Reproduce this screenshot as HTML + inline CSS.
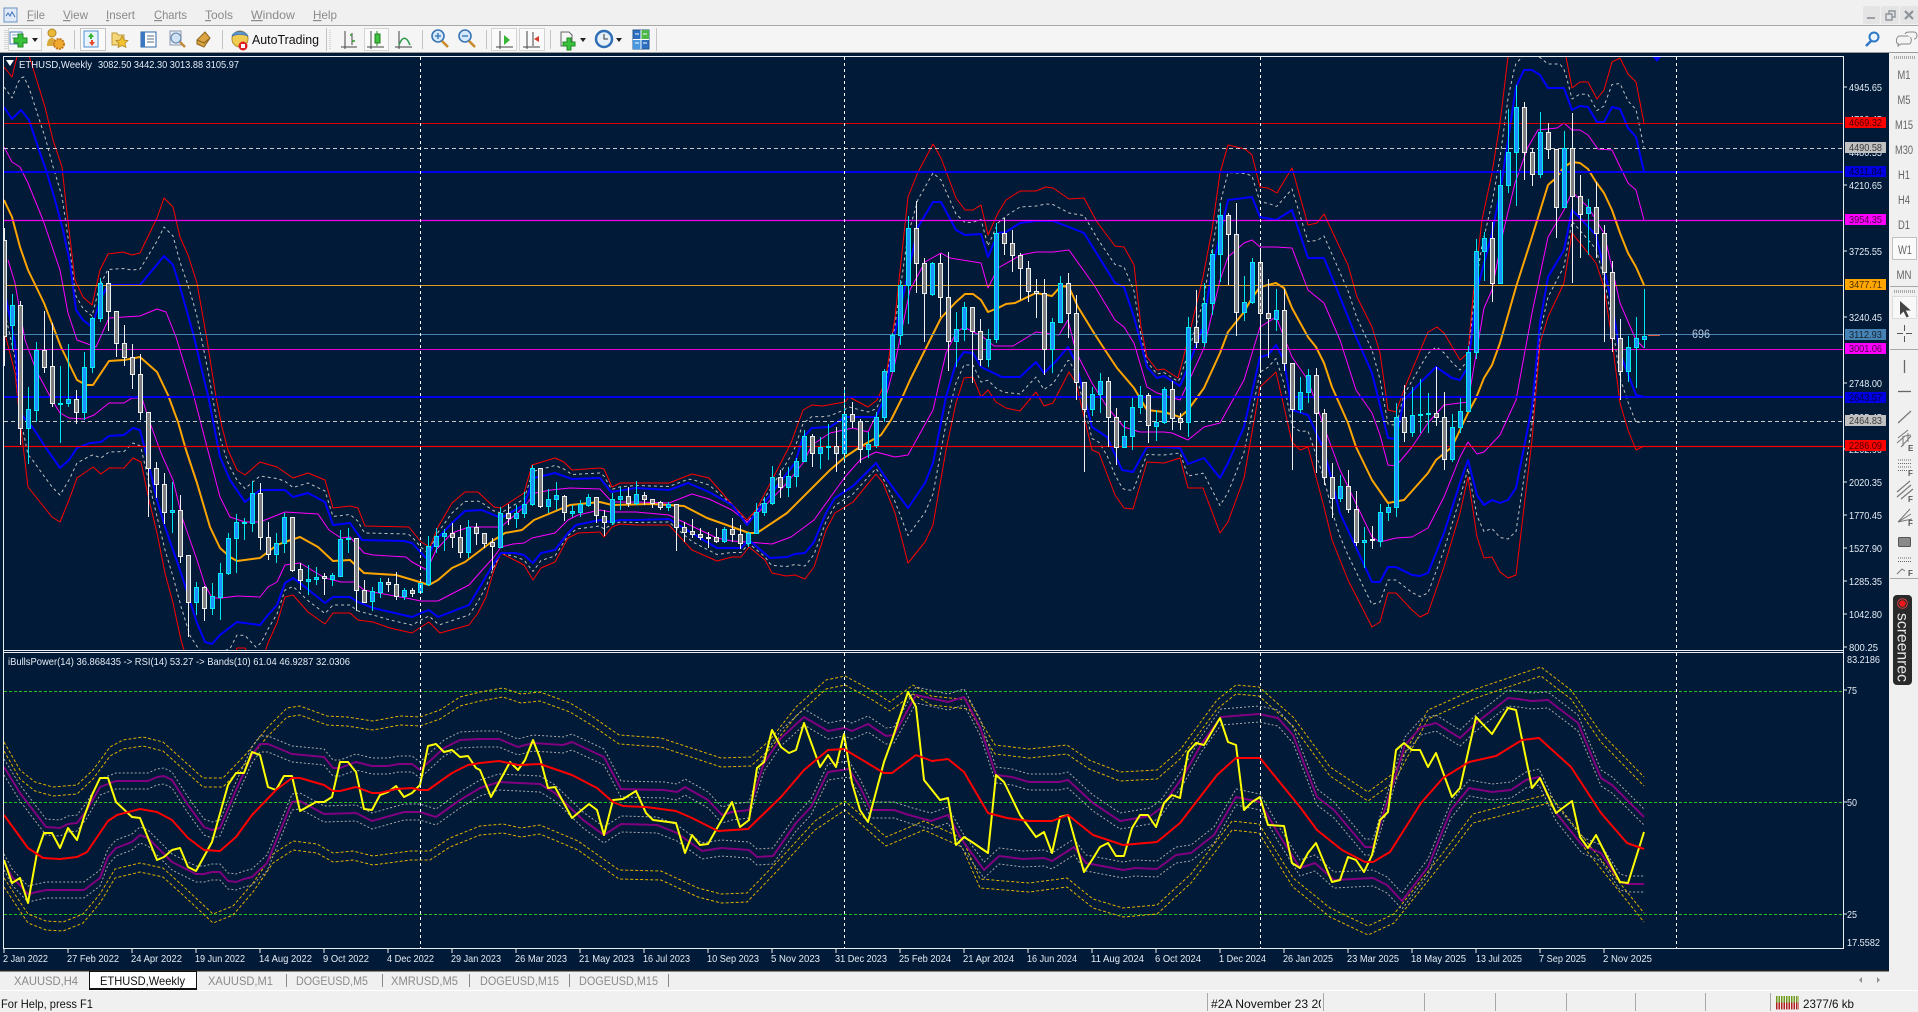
<!DOCTYPE html>
<html><head><meta charset="utf-8"><title>ETHUSD,Weekly</title>
<style>
html,body{margin:0;padding:0;background:#f0f0f0;width:1918px;height:1012px;overflow:hidden}
svg{display:block;font-family:"Liberation Sans",sans-serif}
.m{font-size:12px;fill:#8a8a8a}
.a{font-size:10.5px;fill:#e6edf5}
.k{font-size:10.5px;fill:#000;fill-opacity:.72}
.t{font-size:10.5px;fill:#e6edf5}
.tab{font-size:12px;fill:#8a8a8a}
.tf{font-size:11.5px;fill:#666;text-anchor:middle}
</style></head><body>
<svg id="r" width="1918" height="1012" viewBox="0 0 1918 1012">
<defs>
<clipPath id="c1"><rect x="4" y="57" width="1839" height="593"/></clipPath>
<clipPath id="c2"><rect x="4" y="653" width="1839" height="295"/></clipPath>
<clipPath id="c3"><rect x="1208" y="993" width="113" height="18"/></clipPath>
</defs>
<rect width="1918" height="1012" fill="#f0f0f0"/>
<!-- menu -->
<rect x="0" y="25" width="1918" height="1" fill="#a8a8a8"/>
<rect x="0" y="26" width="1918" height="26" fill="#f5f5f5"/>
<rect x="0" y="52" width="1918" height="1" fill="#9a9a9a"/>
<g>
<rect x="4" y="8" width="13" height="14" fill="#dfe9f7" stroke="#6d92c4"/><path d="M6 16l2-3 2 3 2-4 3 5" fill="none" stroke="#3a6db5"/>
<text class="m" x="27" y="19" textLength="18" lengthAdjust="spacingAndGlyphs"><tspan text-decoration="underline">F</tspan>ile</text>
<text class="m" x="63" y="19" textLength="25" lengthAdjust="spacingAndGlyphs"><tspan text-decoration="underline">V</tspan>iew</text>
<text class="m" x="106" y="19" textLength="29" lengthAdjust="spacingAndGlyphs"><tspan text-decoration="underline">I</tspan>nsert</text>
<text class="m" x="154" y="19" textLength="33" lengthAdjust="spacingAndGlyphs"><tspan text-decoration="underline">C</tspan>harts</text>
<text class="m" x="205" y="19" textLength="28" lengthAdjust="spacingAndGlyphs"><tspan text-decoration="underline">T</tspan>ools</text>
<text class="m" x="251" y="19" textLength="44" lengthAdjust="spacingAndGlyphs"><tspan text-decoration="underline">W</tspan>indow</text>
<text class="m" x="313" y="19" textLength="24" lengthAdjust="spacingAndGlyphs"><tspan text-decoration="underline">H</tspan>elp</text>
</g>
<!-- window buttons -->
<g>
<rect x="1863" y="6" width="17" height="18" rx="2" fill="#e4e4e4"/><rect x="1867" y="17" width="8" height="2" fill="#9aa0a6"/>
<rect x="1881" y="6" width="18" height="18" rx="2" fill="#e4e4e4"/><path d="M1886 14h6v6h-6zM1889 14v-3h6v6h-3" fill="none" stroke="#8d9399" stroke-width="1.4"/>
<rect x="1900" y="6" width="18" height="18" rx="2" fill="#e4e4e4"/><path d="M1905 11l8 8M1913 11l-8 8" stroke="#8d9399" stroke-width="2.2"/>
</g>
<!-- toolbar -->
<g>
<path d="M5 30v19M7 30v19" stroke="#bbb" stroke-dasharray="1 1"/>
<rect x="8.500" y="28.500" width="33" height="22" fill="#f8f8f8" stroke="#d0d0d0"/>
<rect x="10" y="32" width="12" height="12" fill="#fff" stroke="#4f7fc0"/><path d="M12 35h8M12 38h5" stroke="#7aa0d0"/>
<path d="M18 34h5v4h4v5h-4v4h-5v-4h-4v-5h4z" fill="#39c13c" stroke="#1c8a22"/>
<path d="M32 38h6l-3 4z" fill="#222"/>
<circle cx="52" cy="33" r="4" fill="#e9b93a" stroke="#b5842a"/><path d="M47 46c0-7 3-8 5-8s5 2 5 8z" fill="#d9a93c"/>
<circle cx="59" cy="44" r="5" fill="#f0a92e" stroke="#c67b1e" stroke-width="2" stroke-dasharray="2 1"/>
<path d="M74.500 30v19" stroke="#c4c4c4"/>
<rect x="80.500" y="28.500" width="25" height="22" fill="#fafafa" stroke="#c4c4c4"/>
<rect x="84" y="31" width="14" height="16" fill="#e7f4ff" stroke="#4f90d0"/><path d="M91 33l-3 4h2v2h2v-2h2z" fill="#32b232"/><path d="M92 46l3-4h-2v-2h-2v2h-2z" fill="#e84a2a"/>
<path d="M112 33h5l1 2h6v10h-12z" fill="#f4d77a" stroke="#c09a3a"/><path d="M122 36l2 4 4 .5-3 3 1 4-4-2-4 2 1-4-3-3 4-.5z" fill="#f2c230" stroke="#a88424" stroke-width=".7"/>
<rect x="141" y="32" width="15" height="15" fill="#fff" stroke="#2f68a8"/><rect x="141" y="32" width="4" height="15" fill="#3a78c0"/><path d="M147 36h7M147 39h7M147 42h7" stroke="#5a6c80"/>
<rect x="170" y="31" width="11" height="14" fill="#e8eef6" stroke="#8a99ad"/><circle cx="176" cy="38" r="5" fill="#cfe2f5" stroke="#5b7fa8"/><path d="M180 42l5 5" stroke="#c08a3a" stroke-width="2.400"/>
<path d="M197 40l8-8 5 6-6 9-7-3z" fill="#d9a441" stroke="#8e6420"/><path d="M197 40l7 3 6-5" fill="none" stroke="#8e6420"/>
<path d="M222.500 30v19" stroke="#c4c4c4"/>
<circle cx="240" cy="39" r="8" fill="#f0cc52" stroke="#b58e2a"/><path d="M232 36c2-6 13-6 16 0-5-2-11-2-16 0z" fill="#5f97d0" stroke="#3f70a8" stroke-width=".7"/>
<circle cx="243" cy="46" r="4.500" fill="#e02020"/><rect x="241" y="44" width="4" height="4" fill="#fff"/>
<text x="252" y="44" font-size="13" fill="#111" textLength="67" lengthAdjust="spacingAndGlyphs">AutoTrading</text>
<path d="M326.500 28v23" stroke="#c4c4c4"/><path d="M330 30v19" stroke="#bbb" stroke-dasharray="1 1"/>
<path d="M345 31v18M341 47h16M352 33v12" stroke="#444" fill="none"/><path d="M350 35h2M352 41h3" stroke="#2a9a2a" stroke-width="1.500"/>
<rect x="364.500" y="28.500" width="24" height="22" fill="#fafafa" stroke="#d4d4d4"/>
<path d="M371 31v18M367 47h17" stroke="#444" fill="none"/><path d="M377 31v15" stroke="#2a8a2a"/><rect x="375" y="34" width="5" height="9" fill="#3fc23f" stroke="#1f7f1f"/>
<path d="M399 31v18M395 47h17" stroke="#444" fill="none"/><path d="M399 45c3-8 7-10 11 0" fill="none" stroke="#2a9a4a" stroke-width="1.500"/>
<path d="M422.500 30v19" stroke="#c4c4c4"/>
<circle cx="438" cy="36" r="6" fill="#d6e9fa" stroke="#3a75b5" stroke-width="1.600"/><path d="M442 41l6 6" stroke="#c98a2a" stroke-width="2.600"/><path d="M435 36h6M438 33v6" stroke="#2d70b8" stroke-width="1.300"/>
<circle cx="465" cy="36" r="6" fill="#d6e9fa" stroke="#3a75b5" stroke-width="1.600"/><path d="M469 41l6 6" stroke="#c98a2a" stroke-width="2.600"/><path d="M462 36h6" stroke="#2d70b8" stroke-width="1.300"/>
<path d="M486.500 30v19" stroke="#c4c4c4"/>
<rect x="491.500" y="28.500" width="25" height="22" fill="#fafafa" stroke="#d4d4d4"/><path d="M500 31v18M496 47h17" stroke="#444" fill="none"/><path d="M504 35l6 5-6 5z" fill="#37b537"/>
<rect x="519.500" y="28.500" width="25" height="22" fill="#fafafa" stroke="#d4d4d4"/><path d="M527 31v18M523 47h17M533 32v14" stroke="#444" fill="none"/><path d="M534 39l5-3v6z" fill="#d83a2a"/>
<path d="M550.500 30v19" stroke="#c4c4c4"/>
<path d="M561 32h8l3 3v11h-11z" fill="#f6f6f6" stroke="#666"/><path d="M567 38h4v4h4v4h-4v4h-4v-4h-4v-4h4z" fill="#39c13c" stroke="#1c8a22"/>
<path d="M580 38h6l-3 4z" fill="#222"/>
<circle cx="604" cy="39" r="8" fill="#e6f0f9" stroke="#2f6fb5" stroke-width="2.500"/><path d="M604 34v5h4" stroke="#333" fill="none"/>
<path d="M616 38h6l-3 4z" fill="#222"/>
<rect x="633" y="30" width="16" height="19" fill="#2c6fc0" stroke="#23568f"/><rect x="641" y="30" width="8" height="9" fill="#4db848"/><rect x="633" y="39" width="8" height="10" fill="#4a98e0"/><path d="M635 34h4M643 34h4M635 43h4M643 43h4M633 39.500h16M641 30v19" stroke="#fff"/>
<path d="M656.500 28v23" stroke="#c8c8c8"/>
<circle cx="1874" cy="37" r="4.500" fill="#eaf4fd" stroke="#2f78c8" stroke-width="2"/><path d="M1871 41l-5 5" stroke="#2f78c8" stroke-width="2.600"/>
<path d="M1900 36h9c3 0 3 8 0 8h-8l-3 2 .5-2c-3 0-3-8 1.500-8z" fill="#f4f4f4" stroke="#888"/><path d="M1905 34c1-2 3-2 5-2h4c4 0 4 7 0 7" fill="#f4f4f4" stroke="#888"/>
</g>
<!-- chart bg -->
<rect x="0" y="53" width="1889" height="917" fill="#001a38"/>
<g id="main" clip-path="url(#c1)"></g>
<g id="sub" clip-path="url(#c2)"></g>
<!-- frames -->
<g fill="none" stroke="#e8edf2">
<path d="M3.500 650.500V56.500H1843.500V948.500H3.500V650.500H1843.500"/>
<path d="M3.500 652.500H1843.500"/>
</g>
<g stroke="#e8edf2" fill="none">
<path d="M1843 87h4M1843 185h4M1843 251h4M1843 317h4M1843 383h4M1843 449h4M1843 482h4M1843 515h4M1843 548h4M1843 581h4M1843 614h4M1843 647h4M1843 690h4M1843 802h4M1843 914h4"/>
<path d="M4 948v5M68 948v5M132 948v5M196 948v5M260 948v5M324 948v5M388 948v5M452 948v5M516 948v5M580 948v5M644 948v5M708 948v5M772 948v5M836 948v5M900 948v5M964 948v5M1028 948v5M1092 948v5M1156 948v5M1220 948v5M1284 948v5M1348 948v5M1412 948v5M1476 948v5M1540 948v5M1604 948v5"/>
</g>
<!-- chart labels -->
<path d="M6 60h8l-4 6z" fill="#fff"/>
<text class="t" x="19" y="68" textLength="73" lengthAdjust="spacingAndGlyphs">ETHUSD,Weekly</text>
<text class="t" x="98" y="68" textLength="141" lengthAdjust="spacingAndGlyphs">3082.50 3442.30 3013.88 3105.97</text>
<text class="t" x="8" y="665" textLength="342" lengthAdjust="spacingAndGlyphs">iBullsPower(14) 36.868435 -&gt; RSI(14) 53.27 -&gt; Bands(10) 61.04  46.9287 32.0306</text>
<text x="1692" y="338" font-size="12" fill="#b4c6dc" textLength="18" lengthAdjust="spacingAndGlyphs">696</text>
<path d="M1653 57h8l-4 5z" fill="#0000ff"/>
<path d="M1648 335.500h12" stroke="#e0553a"/>
<!-- price axis -->
<g>
<text class="a" x="1849" y="91" textLength="33" lengthAdjust="spacingAndGlyphs">4945.65</text>
<text class="a" x="1849" y="123" textLength="33" lengthAdjust="spacingAndGlyphs">4700.45</text>
<text class="a" x="1849" y="156" textLength="33" lengthAdjust="spacingAndGlyphs">4480.55</text>
<text class="a" x="1849" y="189" textLength="33" lengthAdjust="spacingAndGlyphs">4210.65</text>
<text class="a" x="1849" y="255" textLength="33" lengthAdjust="spacingAndGlyphs">3725.55</text>
<text class="a" x="1849" y="321" textLength="33" lengthAdjust="spacingAndGlyphs">3240.45</text>
<text class="a" x="1849" y="387" textLength="33" lengthAdjust="spacingAndGlyphs">2748.00</text>
<text class="a" x="1849" y="421" textLength="33" lengthAdjust="spacingAndGlyphs">2505.45</text>
<text class="a" x="1849" y="453" textLength="33" lengthAdjust="spacingAndGlyphs">2262.90</text>
<text class="a" x="1849" y="486" textLength="33" lengthAdjust="spacingAndGlyphs">2020.35</text>
<text class="a" x="1849" y="519" textLength="33" lengthAdjust="spacingAndGlyphs">1770.45</text>
<text class="a" x="1849" y="552" textLength="33" lengthAdjust="spacingAndGlyphs">1527.90</text>
<text class="a" x="1849" y="585" textLength="33" lengthAdjust="spacingAndGlyphs">1285.35</text>
<text class="a" x="1849" y="618" textLength="33" lengthAdjust="spacingAndGlyphs">1042.80</text>
<text class="a" x="1849" y="651" textLength="29" lengthAdjust="spacingAndGlyphs">800.25</text>
<text class="a" x="1847" y="663" textLength="33" lengthAdjust="spacingAndGlyphs">83.2186</text>
<text class="a" x="1847" y="694" textLength="10" lengthAdjust="spacingAndGlyphs">75</text>
<text class="a" x="1847" y="806" textLength="10" lengthAdjust="spacingAndGlyphs">50</text>
<text class="a" x="1847" y="918" textLength="10" lengthAdjust="spacingAndGlyphs">25</text>
<text class="a" x="1847" y="946" textLength="33" lengthAdjust="spacingAndGlyphs">17.5582</text>
<rect x="1845" y="117" width="41" height="11" fill="#ff0000"/><text class="k" x="1849" y="126" textLength="33" lengthAdjust="spacingAndGlyphs">4669.32</text>
<rect x="1845" y="142" width="41" height="11" fill="#c0c0c0"/><text class="k" x="1849" y="151" textLength="33" lengthAdjust="spacingAndGlyphs">4490.58</text>
<rect x="1845" y="166" width="41" height="11" fill="#0000e0"/><text class="k" x="1849" y="175" textLength="33" lengthAdjust="spacingAndGlyphs">4311.84</text>
<rect x="1845" y="214" width="41" height="11" fill="#ff00ff"/><text class="k" x="1849" y="223" textLength="33" lengthAdjust="spacingAndGlyphs">3954.35</text>
<rect x="1845" y="279" width="41" height="11" fill="#ffa500"/><text class="k" x="1849" y="288" textLength="33" lengthAdjust="spacingAndGlyphs">3477.71</text>
<rect x="1845" y="329" width="41" height="11" fill="#4682b4"/><text class="k" x="1849" y="338" textLength="33" lengthAdjust="spacingAndGlyphs">3112.93</text>
<rect x="1845" y="343" width="41" height="11" fill="#ff00ff"/><text class="k" x="1849" y="352" textLength="33" lengthAdjust="spacingAndGlyphs">3001.06</text>
<rect x="1845" y="392" width="41" height="11" fill="#0000e0"/><text class="k" x="1849" y="401" textLength="33" lengthAdjust="spacingAndGlyphs">2643.57</text>
<rect x="1845" y="415" width="41" height="11" fill="#c0c0c0"/><text class="k" x="1849" y="424" textLength="33" lengthAdjust="spacingAndGlyphs">2464.83</text>
<rect x="1845" y="440" width="41" height="11" fill="#ff0000"/><text class="k" x="1849" y="449" textLength="33" lengthAdjust="spacingAndGlyphs">2286.09</text>
</g>
<!-- time axis -->
<g>
<text class="a" x="3" y="962" textLength="45" lengthAdjust="spacingAndGlyphs">2 Jan 2022</text>
<text class="a" x="67" y="962" textLength="52" lengthAdjust="spacingAndGlyphs">27 Feb 2022</text>
<text class="a" x="131" y="962" textLength="51" lengthAdjust="spacingAndGlyphs">24 Apr 2022</text>
<text class="a" x="195" y="962" textLength="50" lengthAdjust="spacingAndGlyphs">19 Jun 2022</text>
<text class="a" x="259" y="962" textLength="53" lengthAdjust="spacingAndGlyphs">14 Aug 2022</text>
<text class="a" x="323" y="962" textLength="46" lengthAdjust="spacingAndGlyphs">9 Oct 2022</text>
<text class="a" x="387" y="962" textLength="47" lengthAdjust="spacingAndGlyphs">4 Dec 2022</text>
<text class="a" x="451" y="962" textLength="50" lengthAdjust="spacingAndGlyphs">29 Jan 2023</text>
<text class="a" x="515" y="962" textLength="52" lengthAdjust="spacingAndGlyphs">26 Mar 2023</text>
<text class="a" x="579" y="962" textLength="55" lengthAdjust="spacingAndGlyphs">21 May 2023</text>
<text class="a" x="643" y="962" textLength="47" lengthAdjust="spacingAndGlyphs">16 Jul 2023</text>
<text class="a" x="707" y="962" textLength="52" lengthAdjust="spacingAndGlyphs">10 Sep 2023</text>
<text class="a" x="771" y="962" textLength="49" lengthAdjust="spacingAndGlyphs">5 Nov 2023</text>
<text class="a" x="835" y="962" textLength="52" lengthAdjust="spacingAndGlyphs">31 Dec 2023</text>
<text class="a" x="899" y="962" textLength="52" lengthAdjust="spacingAndGlyphs">25 Feb 2024</text>
<text class="a" x="963" y="962" textLength="51" lengthAdjust="spacingAndGlyphs">21 Apr 2024</text>
<text class="a" x="1027" y="962" textLength="50" lengthAdjust="spacingAndGlyphs">16 Jun 2024</text>
<text class="a" x="1091" y="962" textLength="53" lengthAdjust="spacingAndGlyphs">11 Aug 2024</text>
<text class="a" x="1155" y="962" textLength="46" lengthAdjust="spacingAndGlyphs">6 Oct 2024</text>
<text class="a" x="1219" y="962" textLength="47" lengthAdjust="spacingAndGlyphs">1 Dec 2024</text>
<text class="a" x="1283" y="962" textLength="50" lengthAdjust="spacingAndGlyphs">26 Jan 2025</text>
<text class="a" x="1347" y="962" textLength="52" lengthAdjust="spacingAndGlyphs">23 Mar 2025</text>
<text class="a" x="1411" y="962" textLength="55" lengthAdjust="spacingAndGlyphs">18 May 2025</text>
<text class="a" x="1476" y="962" textLength="46" lengthAdjust="spacingAndGlyphs">13 Jul 2025</text>
<text class="a" x="1539" y="962" textLength="47" lengthAdjust="spacingAndGlyphs">7 Sep 2025</text>
<text class="a" x="1603" y="962" textLength="49" lengthAdjust="spacingAndGlyphs">2 Nov 2025</text>
</g>
<!-- tabs -->
<rect x="0" y="970" width="1891" height="1.500" fill="#222"/>
<rect x="0" y="990" width="1918" height="1" fill="#fff"/>
<rect x="89.500" y="971.500" width="107" height="17" fill="#fff" stroke="#111"/><rect x="89" y="988" width="108" height="2" fill="#111"/>
<text class="tab" x="14" y="985" textLength="64" lengthAdjust="spacingAndGlyphs">XAUUSD,H4</text>
<text class="tab" x="100" y="985" textLength="85" lengthAdjust="spacingAndGlyphs" style="fill:#111">ETHUSD,Weekly</text>
<text class="tab" x="208" y="985" textLength="65" lengthAdjust="spacingAndGlyphs">XAUUSD,M1</text>
<text class="tab" x="296" y="985" textLength="72" lengthAdjust="spacingAndGlyphs">DOGEUSD,M5</text>
<text class="tab" x="391" y="985" textLength="67" lengthAdjust="spacingAndGlyphs">XMRUSD,M5</text>
<text class="tab" x="480" y="985" textLength="79" lengthAdjust="spacingAndGlyphs">DOGEUSD,M15</text>
<text class="tab" x="579" y="985" textLength="79" lengthAdjust="spacingAndGlyphs">DOGEUSD,M15</text>
<path d="M286.500 974v13M382.500 974v13M469.500 974v13M569.500 974v13M668.500 974v13" stroke="#8a8a8a"/>
<path d="M1862 977v6l-3-3zM1877 977v6l3-3z" fill="#8f8f8f"/>
<!-- status -->
<text x="1" y="1008" font-size="12" fill="#111" textLength="92" lengthAdjust="spacingAndGlyphs">For Help, press F1</text>
<path d="M1207.500 993v18M1323.500 993v18M1424.500 993v18M1495.500 993v18M1566.500 993v18M1635.500 993v18M1705.500 993v18M1770.500 993v18" stroke="#a8a8a8"/>
<text x="1211" y="1008" font-size="12" fill="#111" textLength="114" lengthAdjust="spacingAndGlyphs" clip-path="url(#c3)">#2A November 23 20</text>
<path d="M1776 1001h23" stroke="#6f9a1f" stroke-width="8" stroke-dasharray="1.500 1" transform="translate(0 -1)"/>
<path d="M1776 1006h23" stroke="#b02020" stroke-width="7" stroke-dasharray="1.500 1"/>
<text x="1803" y="1008" font-size="12" fill="#111" textLength="51" lengthAdjust="spacingAndGlyphs">2377/6 kb</text>
<!-- right toolbar -->
<g>
<rect x="1889" y="53" width="29" height="937" fill="#f0f0f0"/>
<path d="M1894 57.500h22" stroke="#aaa" stroke-width="3" stroke-dasharray="1 1"/>
<rect x="1892.500" y="237.500" width="24" height="22" fill="#fafafa" stroke="#c0c0c0"/>
<text class="tf" x="1904" y="79" textLength="13" lengthAdjust="spacingAndGlyphs">M1</text>
<text class="tf" x="1904" y="104" textLength="13" lengthAdjust="spacingAndGlyphs">M5</text>
<text class="tf" x="1904" y="129" textLength="18" lengthAdjust="spacingAndGlyphs">M15</text>
<text class="tf" x="1904" y="154" textLength="18" lengthAdjust="spacingAndGlyphs">M30</text>
<text class="tf" x="1904" y="179" textLength="12" lengthAdjust="spacingAndGlyphs">H1</text>
<text class="tf" x="1904" y="204" textLength="12" lengthAdjust="spacingAndGlyphs">H4</text>
<text class="tf" x="1904" y="229" textLength="12" lengthAdjust="spacingAndGlyphs">D1</text>
<text class="tf" x="1905" y="254" textLength="14" lengthAdjust="spacingAndGlyphs">W1</text>
<text class="tf" x="1904" y="279" textLength="15" lengthAdjust="spacingAndGlyphs">MN</text>
<path d="M1890 286.500h28" stroke="#a8a8a8"/><path d="M1894 291.500h22" stroke="#aaa" stroke-width="3" stroke-dasharray="1 1"/>
<rect x="1892.500" y="296.500" width="24" height="22" fill="#f8f8f8" stroke="#dcdcdc"/>
<path d="M1900 301v14l3.500-3.500 3 6 2.300-1-3-6h5z" fill="#444"/>
<path d="M1904.500 325v6M1904.500 336v6M1897 333.500h6M1906 333.500h6" stroke="#555"/>
<path d="M1890 349.500h28" stroke="#a8a8a8"/>
<path d="M1904.500 360v13" stroke="#666" stroke-width="1.300"/>
<path d="M1898 391.500h13" stroke="#666" stroke-width="1.300"/>
<path d="M1898 423l13-12" stroke="#777" stroke-width="1.300"/>
<path d="M1897 443l8-7 6-1M1898 438l10-8M1901 447l10-11M1903 436v10M1908 433v9" stroke="#777" fill="none"/><text x="1908" y="451" font-size="8" font-weight="bold" fill="#555">E</text>
<path d="M1898 460h14M1898 463.500h14M1898 467h14M1898 470.500h10" stroke="#666" stroke-dasharray="1 1"/><text x="1908" y="476" font-size="8" font-weight="bold" fill="#555">F</text>
<path d="M1897 492l13-11M1897 497l14-12M1901 499l12-10" stroke="#777" fill="none" stroke-width="1.200"/><text x="1908" y="502" font-size="8" font-weight="bold" fill="#555">F</text>
<path d="M1898 522l12-13M1898 522l13-8M1898 522l14-3" stroke="#777" fill="none"/><text x="1908" y="526" font-size="8" font-weight="bold" fill="#555">F</text>
<rect x="1898.500" y="537.500" width="12" height="9" rx="1" fill="#8a8a8a" stroke="#555"/>
<path d="M1898 558h14M1898 561.500h14" stroke="#666" stroke-dasharray="1 1"/><path d="M1897 574l5-5 3 2" fill="none" stroke="#777"/><text x="1908" y="576" font-size="8" font-weight="bold" fill="#555">F</text>
<path d="M1890 578.500h28" stroke="#a8a8a8"/>
<rect x="1893" y="595" width="19" height="90" rx="4" fill="#2a2a2a"/>
<circle cx="1902.500" cy="603.500" r="4.800" fill="none" stroke="#d04040"/><circle cx="1902.500" cy="603.500" r="3.200" fill="#f01818"/>
<text transform="translate(1897.500 613) rotate(90)" font-size="16" fill="#e8e8e8" textLength="69" lengthAdjust="spacingAndGlyphs">screenrec</text>
</g>
</svg>
<script>
var P=function(s){return s.trim().split(/\s+/).map(function(p){return p.split(',').map(Number)})};
var S=function(a){return a.map(function(p){return p[0]+','+p[1]}).join(' ')};
function Y(a,x){if(x<=a[0][0])return a[0][1];for(var i=1;i<a.length;i++){if(x<=a[i][0]){var t=(x-a[i-1][0])/(a[i][0]-a[i-1][0]||1);return a[i-1][1]+t*(a[i][1]-a[i-1][1])}}return a[a.length-1][1]}
function Mid(a,b,t){var xs={};a.concat(b).forEach(function(p){xs[p[0]]=1});return Object.keys(xs).map(Number).sort(function(u,v){return u-v}).map(function(x){var y=Y(a,x);return [x,+(y+(Y(b,x)-y)*t).toFixed(1)]})}
function PL(a,col,w,dash,dy){return '<polyline points="'+S(a)+'" fill="none" stroke="'+col+'" stroke-width="'+w+'"'+(dash?' stroke-dasharray="'+dash+'"':'')+(dy?' transform="translate(0 '+dy+')"':'')+' stroke-linejoin="round"/>'}

var ru=P("4,67 12,77 18,52 24,40 32,65 45,107 53,140 62,167 67,213 75,280 83,297 92,305 100,270 108,254 123,252 132,255 140,253 157,218 164,198 173,207 180,237 188,255 197,283 207,340 216,397 222,427 228,450 237,470 245,475 260,462 277,467 293,478 308,473 325,480 333,508 350,506 358,508 365,526 409,527 421,542 430,547 438,527 452,503 465,492 478,492 494,507 501,508 524,493 532,465 555,458 564,462 572,470 600,468 604,469 612,487 620,483 636,483 669,483 692,474 709,478 730,502 747,520 756,510 772,480 791,443 803,410 812,405 822,406 845,402 849,397 868,407 877,400 885,383 895,317 908,197 918,172 933,144 941,158 956,198 965,210 973,210 981,205 988,235 998,213 1006,200 1020,191 1036,191 1046,187 1053,188 1069,199 1084,198 1097,222 1115,246 1124,247 1134,265 1141,327 1147,357 1157,370 1164,369 1178,378 1188,340 1203,277 1212,230 1220,173 1228,145 1245,149 1252,155 1260,187 1268,188 1277,193 1292,168 1308,225 1317,223 1324,214 1348,265 1357,297 1372,327 1380,353 1388,410 1396,412 1404,390 1412,370 1428,332 1437,327 1444,333 1460,360 1468,353 1473,297 1482,220 1492,173 1500,123 1508,57 1514,40 1560,40 1566,57 1572,88 1580,82 1588,82 1597,99 1604,90 1612,62 1620,58 1628,74 1636,82 1644,123");
var rl=P("4,330 15,373 20,420 28,487 36,497 44,507 52,517 60,522 69,500 77,478 93,467 101,474 109,468 124,468 133,458 141,462 149,500 157,533 165,573 173,603 181,640 190,670 230,670 237,648 245,648 256,670 264,655 268,643 277,623 285,597 293,595 308,612 325,624 333,613 350,613 358,620 373,622 390,628 412,633 421,627 429,622 440,633 469,625 478,613 486,597 494,570 501,553 524,565 533,580 541,568 555,562 568,538 578,533 600,532 604,537 612,527 620,524 636,525 669,525 692,550 717,561 732,557 741,557 749,547 765,560 772,573 786,576 795,575 805,579 814,567 826,530 835,513 853,502 876,474 883,483 895,513 908,563 925,542 933,525 946,450 956,403 964,378 973,377 981,397 988,390 996,402 1006,408 1020,411 1036,392 1044,406 1053,403 1069,372 1076,383 1092,450 1099,453 1115,495 1124,508 1133,509 1147,462 1164,463 1180,458 1188,488 1203,488 1220,533 1228,522 1244,478 1260,387 1276,372 1292,442 1300,450 1308,447 1324,507 1332,540 1348,580 1372,627 1380,622 1388,593 1396,593 1412,610 1420,617 1428,613 1444,567 1460,513 1468,477 1477,537 1484,558 1492,557 1500,572 1508,578 1516,575 1532,440 1540,343 1548,317 1564,283 1572,233 1596,263 1604,287 1612,340 1620,403 1628,430 1636,450 1644,446");
var bu=P("4,107 12,119 21,110 29,120 38,147 47,173 55,200 63,230 70,263 76,310 83,320 92,327 100,300 108,285 140,285 164,256 173,265 180,287 193,333 209,400 220,457 230,480 245,502 260,490 285,490 293,497 308,493 325,502 333,525 350,523 362,540 404,541 412,543 427,559 436,540 452,523 465,511 482,510 501,518 524,505 534,478 555,473 572,479 600,478 611,492 636,488 669,490 688,483 709,492 732,505 747,525 757,512 795,463 803,437 812,428 830,427 845,417 876,417 885,397 895,333 918,227 933,202 941,202 956,230 965,235 981,234 988,257 998,233 1006,232 1020,223 1036,221 1053,221 1069,227 1084,233 1115,283 1124,287 1134,317 1147,367 1157,378 1164,376 1180,386 1188,367 1203,327 1212,270 1228,200 1252,197 1260,217 1276,220 1292,210 1308,258 1324,258 1340,297 1356,337 1372,373 1388,438 1396,439 1404,400 1420,383 1436,367 1452,378 1460,380 1468,367 1477,290 1492,233 1500,193 1508,140 1516,87 1524,70 1532,70 1540,75 1548,88 1564,88 1572,110 1580,106 1588,107 1597,122 1604,122 1612,107 1620,109 1628,128 1636,137 1644,172");
var bl=P("6,298 15,343 20,413 33,428 46,448 60,468 69,460 77,448 90,443 101,442 109,436 124,435 133,428 140,430 147,457 157,500 165,527 181,573 197,623 205,642 212,644 220,635 237,622 260,625 268,615 277,605 285,583 293,578 300,583 325,603 333,597 350,597 358,602 373,608 412,617 421,613 429,610 438,617 469,605 478,590 494,563 501,553 515,553 524,555 533,563 541,553 555,550 568,533 576,525 600,520 611,522 620,520 636,520 669,519 700,538 717,548 741,548 749,540 770,558 787,557 795,554 805,553 814,542 826,513 835,498 853,486 876,463 885,477 908,508 925,483 933,463 946,397 956,363 964,352 973,353 981,367 1002,377 1020,377 1036,362 1044,373 1057,360 1068,347 1076,363 1092,427 1107,437 1122,470 1133,472 1147,447 1164,447 1180,448 1188,464 1204,458 1220,478 1228,463 1244,427 1260,357 1268,355 1276,345 1284,360 1292,410 1308,415 1324,450 1340,513 1372,582 1380,582 1388,567 1396,567 1412,575 1420,576 1428,573 1444,533 1460,483 1468,460 1477,495 1484,505 1492,500 1500,503 1508,500 1516,488 1532,407 1540,323 1548,277 1564,250 1572,210 1580,218 1596,235 1612,303 1620,353 1636,395 1644,397");
var mu=P("4,147 12,162 20,167 28,183 43,220 60,270 68,313 77,340 96,347 109,318 124,317 140,316 157,309 166,312 176,337 193,393 207,447 220,497 230,517 245,522 260,522 285,512 318,514 329,530 341,538 350,537 364,553 373,555 406,557 412,562 427,570 436,550 452,533 469,527 501,527 524,507 535,493 551,490 570,488 600,489 612,502 636,502 669,503 692,494 709,499 732,510 747,522 756,515 787,483 803,463 812,445 830,433 853,428 868,432 887,393 895,363 910,290 925,262 941,253 950,258 981,263 988,288 998,268 1021,255 1036,252 1053,252 1069,250 1094,285 1115,320 1124,327 1134,343 1147,387 1157,393 1164,395 1180,400 1188,383 1204,348 1220,280 1228,257 1244,243 1252,240 1260,247 1276,247 1292,248 1308,290 1324,303 1340,340 1356,390 1372,413 1380,435 1388,465 1396,466 1412,447 1428,423 1444,405 1468,402 1484,308 1492,290 1503,233 1515,183 1528,147 1538,130 1557,128 1564,123 1572,130 1580,130 1588,135 1598,149 1612,150 1628,183 1636,190 1644,220");
var ml=P("8,260 15,283 25,340 36,370 52,400 60,413 69,418 84,419 94,415 109,403 124,403 132,398 142,398 149,420 161,453 173,480 182,517 197,560 205,585 212,598 222,598 237,596 260,597 268,587 277,582 285,565 300,563 325,578 341,582 354,582 364,590 373,592 406,598 421,601 438,601 469,585 484,568 494,557 501,547 513,544 524,543 532,538 555,533 568,520 578,515 600,510 611,512 636,512 669,515 700,530 717,538 732,541 747,542 772,544 791,537 814,520 845,477 860,460 876,452 895,457 908,455 918,437 933,410 946,353 956,333 964,327 983,337 994,346 1013,346 1036,332 1059,335 1068,320 1076,352 1092,383 1107,407 1124,427 1140,432 1164,432 1172,433 1188,440 1204,427 1220,423 1244,380 1260,327 1276,317 1292,357 1308,380 1324,427 1340,470 1372,537 1380,542 1396,538 1412,537 1428,528 1444,497 1460,457 1468,442 1477,454 1484,452 1500,435 1516,400 1532,313 1548,237 1564,210 1572,192 1588,207 1604,233 1620,303 1636,340 1644,348");
var or=P("4,200 12,217 20,247 28,270 44,303 61,347 77,380 86,385 93,385 109,361 124,360 140,357 157,372 168,395 178,422 186,450 197,483 210,527 220,548 230,557 237,561 260,558 277,545 285,542 300,537 318,547 333,561 350,560 364,573 396,575 413,580 429,585 438,580 452,568 465,562 494,540 505,533 522,530 534,520 551,513 570,505 600,502 612,505 652,504 668,505 684,506 707,518 749,533 757,533 772,523 787,513 830,470 845,457 860,447 881,435 891,420 902,398 910,380 925,350 941,318 956,302 965,294 973,294 981,300 988,312 998,308 1006,304 1015,303 1036,293 1052,296 1061,286 1069,287 1078,307 1094,333 1105,350 1117,368 1134,388 1147,410 1164,412 1180,417 1188,410 1204,388 1220,353 1228,332 1244,312 1252,298 1260,287 1276,283 1284,288 1292,308 1308,337 1316,347 1324,363 1332,387 1348,423 1356,447 1372,480 1388,503 1404,500 1428,473 1436,460 1452,447 1468,413 1476,398 1484,378 1492,365 1500,343 1516,287 1532,237 1548,185 1556,178 1564,167 1572,162 1580,163 1588,169 1596,182 1604,193 1612,210 1620,233 1628,253 1636,267 1644,285");

var cs="b228 366 240 336,c294 350 305 325,b301 445 305 428,c387 464 409 428,c342 422 350 410,b311 373 350 367,b323 407 366 403,c366 443 403 404,c344 407 399 403,b390 424 399 412,c352 420 367 412,c317 373 318 367,c278 322 283 318,b271 331 283 311,b311 357 311 343,b325 366 343 357,b344 389 357 374,b354 420 374 412,b412 517 412 468,b462 498 468 484,b473 524 484 512,c482 533 510 512,b495 563 510 556,b555 637 555 602,c582 615 587 602,b586 621 587 608,c583 615 596 608,c563 620 573 597,c533 575 538 573,c514 573 522 538,c518 540 522 523,c481 532 493 523,b483 550 493 537,b522 560 537 554,c533 563 543 554,c513 553 517 543,b517 572 517 570,b563 590 569 580,c565 595 579 581,c567 585 577 579,b573 595 576 578,c573 586 575 579,c530 577 539 576,c528 553 538 539,b538 611 538 590,b580 603 590 602,c587 611 591 601,c578 598 582 592,b578 592 582 584,b572 600 584 596,c588 600 590 596,b588 597 590 593,c583 593 583 592,c536 586 546 584,c528 553 536 546,c529 551 533 536,b523 548 533 537,b525 558 537 552,c520 558 527 552,b523 545 527 533,b533 548 533 543,b538 570 542 546,c507 548 513 547,b504 525 513 518,c505 528 513 518,c492 518 504 513,c465 506 468 504,b468 508 468 506,c489 513 499 506,c482 510 495 499,b495 521 496 512,c505 517 511 513,c500 517 504 512,c494 507 497 505,b497 523 497 515,b510 536 516 522,c493 525 499 522,c487 510 496 499,b487 507 496 503,c481 505 494 503,b492 505 495 499,b499 508 499 503,b501 510 502 507,c502 511 504 507,b504 551 504 527,b522 542 527 532,b519 538 531 534,b528 540 534 537,b532 548 537 538,b528 543 537 541,c527 543 529 541,b518 542 529 534,b525 549 534 543,c532 547 533 543,c503 534 512 533,c497 516 503 512,c466 505 477 503,b470 498 477 487,c467 497 476 487,c458 487 461 476,c430 461 436 461,b434 467 436 453,c437 469 447 453,c424 460 446 447,b427 472 446 453,c387 463 414 453,b402 428 414 421,b419 463 421 449,c432 458 444 449,c412 448 417 445,c369 422 371 417,c333 372 335 371,c280 345 285 335,c216 324 228 285,b201 293 228 263,b258 342 263 293,c262 296 263 294,b254 317 263 297,b252 371 297 341,c312 367 329 341,c302 341 307 329,b307 383 307 331,b319 366 331 359,c329 367 339 359,c223 343 233 339,b218 255 233 243,b230 272 243 255,b253 300 255 268,b261 302 268 291,b279 318 291 293,b279 375 293 349,c318 373 322 349,c276 323 283 322,b273 338 283 313,b295 400 313 382,b382 472 382 409,c387 416 394 409,c373 413 381 394,b377 447 381 417,b408 465 417 447,c421 448 436 447,c398 450 407 436,c386 414 395 407,b393 443 395 425,c410 441 422 426,c387 424 389 422,b381 430 389 418,b413 430 418 422,c317 437 327 422,b290 348 327 342,c283 347 303 342,c249 315 254 303,c203 282 215 254,b213 285 215 234,b203 336 234 312,c276 321 302 312,c258 304 262 302,b248 373 262 313,b279 358 313 318,c289 331 310 319,b289 371 310 363,b363 470 363 409,c377 413 392 409,c369 403 375 392,b368 473 375 413,b409 485 413 477,b463 518 477 498,c475 502 486 498,b470 513 486 509,b491 546 509 542,c527 568 540 542,b526 549 539 540,c504 547 512 541,c504 521 507 512,c403 517 417 507,b385 442 417 432,c387 437 415 432,c379 433 414 415,c393 433 413 414,b367 426 413 417,b392 470 417 459,c414 462 427 459,c398 433 411 427,c346 412 352 411,c239 359 251 352,c232 281 238 251,b222 302 238 283,c170 284 185 283,c109 193 152 185,c85 206 107 152,b102 180 107 152,b148 186 152 174,c112 178 132 174,b123 159 132 149,b149 238 149 207,c131 208 148 207,b113 283 148 196,b175 258 196 214,c199 255 207 213,b182 258 207 233,b225 342 233 272,b261 352 272 338,b319 400 338 371,c336 382 347 371,c317 388 338 347,c289 348 336 339";
var wb='',wc='',bb='',bc='';
cs.split(',').forEach(function(s,i){var b=s[0]=='b',a=s.slice(1).split(' ').map(Number),x=4+8*i;
var w='M'+(x+.5)+' '+a[0]+'V'+a[1];
var r='M'+(x-1.5)+' '+(a[2]+.5)+'H'+(x+2.5)+'V'+(a[3]+.5)+'H'+(x-1.5)+'Z';
if(b){wb+=w;bb+=r}else{wc+=w;bc+=r}});

var h='';
h+=PL(ru,'#ff0000',1)+PL(rl,'#ff0000',1);
h+=PL(Mid(bu,ru,.5),'#c0c0c0',1,'3 3')+PL(Mid(bl,rl,.5),'#c0c0c0',1,'3 3');
h+=PL(mu,'#ff00ff',1)+PL(ml,'#ff00ff',1);
h+=PL(bu,'#0000ff',2)+PL(bl,'#0000ff',2);
h+=PL(or,'#ffa500',2);
function HL(y,c,w,d){return '<path d="M4 '+y+'H1843" stroke="'+c+'" stroke-width="'+w+'"'+(d?' stroke-dasharray="'+d+'"':'')+'/>'}
h+=HL(123.5,'#dd0000',1)+HL(148.5,'#c8c8c8',1,'4 3')+HL(172,'#0000ee',2)+HL(220.5,'#f000f0',1.3)+HL(285.5,'#e09a20',1)+HL(334.5,'#4682b4',1)+HL(349.5,'#e000e0',1)+HL(397,'#0000ee',2)+HL(421.5,'#c8c8c8',1,'4 3')+HL(446.5,'#f00000',1.2);
h+='<path d="'+wb+'" stroke="#f0f0f0" fill="none"/><path d="'+wc+'" stroke="#00e5ee" fill="none"/>';
h+='<path d="'+bb+'" stroke="#f0f0f0" fill="#808080" fill-rule="nonzero"/><path d="'+bc+'" stroke="#00eeee" fill="#1e90ff"/>';
h+='<path d="M420.500 57V650M844.500 57V650M1260.500 57V650M1676.500 57V650" stroke="#fff" stroke-dasharray="3 3"/>';
document.getElementById('main').innerHTML=h;

var ye=P("4,860 12,883 20,878 28,903 37,853 44,833 52,833 60,848 68,828 77,840 84,817 92,795 100,778 108,778 116,802 132,817 140,818 157,860 164,857 172,850 180,848 188,867 196,871 212,842 228,785 236,773 244,773 252,752 260,755 268,787 276,790 284,776 292,776 300,811 316,802 324,802 332,797 340,762 348,762 356,772 364,809 372,810 380,795 388,792 396,786 404,797 412,793 420,785 428,746 436,744 444,752 452,750 460,757 468,756 476,768 480,770 491,797 503,775 510,762 518,770 525,760 533,740 540,758 548,788 555,787 572,818 589,804 597,810 604,835 613,800 623,799 636,791 646,813 653,820 676,823 685,853 692,835 700,845 708,844 732,802 740,827 749,820 757,768 764,762 772,730 781,747 789,753 796,750 804,723 820,767 828,755 836,767 844,734 852,783 860,810 868,822 884,762 892,740 908,692 916,707 924,780 940,800 948,798 956,845 964,837 972,842 988,853 996,775 1004,782 1020,815 1036,837 1044,832 1052,853 1060,817 1068,815 1084,872 1092,860 1100,847 1108,843 1116,856 1124,856 1132,828 1140,815 1148,815 1156,827 1164,803 1172,795 1180,798 1188,752 1196,743 1204,745 1220,718 1228,742 1236,745 1244,810 1252,802 1260,797 1268,825 1284,826 1292,863 1300,868 1308,853 1316,843 1332,882 1340,880 1348,857 1356,860 1364,872 1372,855 1380,820 1388,812 1396,750 1404,743 1412,750 1420,750 1428,767 1436,753 1452,797 1460,788 1476,717 1492,734 1508,708 1516,710 1532,788 1540,778 1556,813 1572,801 1580,837 1588,848 1596,835 1612,867 1620,882 1628,883 1644,832");
var rd=P("4,815 28,848 43,858 60,859 77,857 87,852 108,821 117,815 140,809 157,812 172,820 188,838 204,850 220,851 236,837 252,815 276,790 292,778 300,778 324,785 333,791 340,791 356,787 372,793 380,793 396,789 412,788 420,790 428,790 452,773 468,765 480,763 499,761 518,765 540,764 572,775 597,788 613,802 623,806 646,807 676,811 692,818 718,831 748,829 781,797 804,770 828,750 844,749 884,773 892,773 916,755 932,761 948,759 964,772 988,813 1007,818 1029,821 1052,821 1068,815 1093,835 1123,845 1157,842 1180,823 1217,775 1236,758 1260,758 1300,807 1317,830 1342,850 1365,862 1373,862 1390,852 1421,803 1443,778 1469,762 1496,756 1522,740 1539,738 1571,767 1601,813 1627,843 1644,849");
var pu=P("4,767 20,793 33,810 46,827 60,828 68,824 77,823 87,810 100,787 116,781 148,781 157,777 164,776 172,780 188,805 204,827 212,830 220,828 236,790 252,755 260,744 268,744 292,754 324,757 333,768 340,768 356,762 372,766 388,766 399,764 412,764 420,770 444,748 460,740 480,739 499,739 518,747 533,743 563,745 572,742 604,757 621,789 664,790 677,792 685,787 708,800 722,815 732,812 749,810 764,763 781,738 804,717 828,731 844,728 852,731 868,724 886,736 894,735 916,695 948,702 964,697 980,727 996,775 1012,777 1029,782 1059,782 1068,780 1093,803 1120,821 1150,816 1161,808 1184,775 1202,743 1221,717 1259,714 1278,718 1293,735 1317,797 1334,810 1365,847 1373,847 1405,745 1421,727 1436,723 1460,738 1476,723 1508,698 1518,699 1532,701 1548,700 1578,723 1601,778 1612,785 1644,817");
var pl=P("4,862 12,877 28,894 46,890 84,890 100,878 108,857 116,848 132,842 140,835 148,838 172,862 196,874 204,874 212,872 220,872 228,881 236,882 244,879 252,877 267,863 292,802 300,801 324,814 356,813 372,821 404,812 420,812 436,817 460,800 480,788 499,782 540,784 555,793 583,820 604,835 621,824 657,825 677,833 702,851 721,848 749,850 757,857 773,856 796,823 811,807 828,772 849,769 860,787 871,810 894,810 909,815 931,821 948,815 962,840 984,870 999,856 1023,859 1044,858 1052,861 1074,847 1086,863 1123,870 1135,868 1157,869 1176,855 1191,853 1214,835 1236,797 1260,802 1278,833 1300,868 1315,863 1334,880 1373,878 1387,885 1402,901 1428,867 1451,810 1469,788 1492,792 1511,790 1526,780 1539,777 1556,813 1582,845 1601,853 1620,882 1627,884 1644,884");
var gu=P("4,742 20,770 35,782 53,787 77,785 93,770 110,747 123,740 143,737 163,742 183,760 203,778 223,778 247,753 267,728 287,708 300,706 327,716 347,717 373,721 400,716 420,717 440,710 460,697 480,692 503,688 521,694 540,692 570,703 593,717 619,735 661,738 691,748 721,758 751,757 770,740 796,707 826,680 845,676 871,690 890,702 913,685 931,696 969,700 984,727 995,745 1029,749 1067,745 1089,760 1120,772 1157,770 1180,750 1217,700 1236,685 1259,687 1293,717 1330,767 1368,792 1394,773 1428,710 1473,690 1511,677 1541,667 1571,690 1601,733 1644,777");
var gl=P("4,887 28,923 46,930 63,931 83,923 100,903 115,878 140,872 163,877 183,895 213,923 233,915 253,892 273,863 293,850 317,853 333,862 353,860 373,865 410,860 430,860 450,847 480,835 503,833 521,837 540,834 578,850 619,879 661,880 698,897 721,903 747,902 781,867 815,830 845,810 886,846 924,830 962,847 980,888 1029,892 1067,887 1093,908 1123,917 1157,914 1191,883 1232,830 1259,833 1293,887 1330,917 1368,935 1394,923 1439,867 1473,823 1511,813 1549,803 1594,860 1644,922");
var s='';
s+='<path d="M4 691.500H1843M4 802.500H1843M4 914.500H1843" stroke="#22c022" stroke-dasharray="3 2"/>';
s+=PL(gu,'#e0b000',1,'3 2')+PL(gu,'#e0b000',1,'3 2',9)+PL(gl,'#e0b000',1,'3 2')+PL(gl,'#e0b000',1,'3 2',-9);
s+=PL(pu,'#a8a8a8',1,'2 2',-8)+PL(pu,'#a8a8a8',1,'2 2',8)+PL(pl,'#a8a8a8',1,'2 2',-8)+PL(pl,'#a8a8a8',1,'2 2',8);
s+=PL(pu,'#800080',2)+PL(pl,'#800080',2)+PL(ye,'#ffff00',2)+PL(rd,'#ff0000',2);
s+='<path d="M420.500 653V948M844.500 653V948M1260.500 653V948M1676.500 653V948" stroke="#fff" stroke-dasharray="3 3"/>';
document.getElementById('sub').innerHTML=s;
</script>
</body></html>
